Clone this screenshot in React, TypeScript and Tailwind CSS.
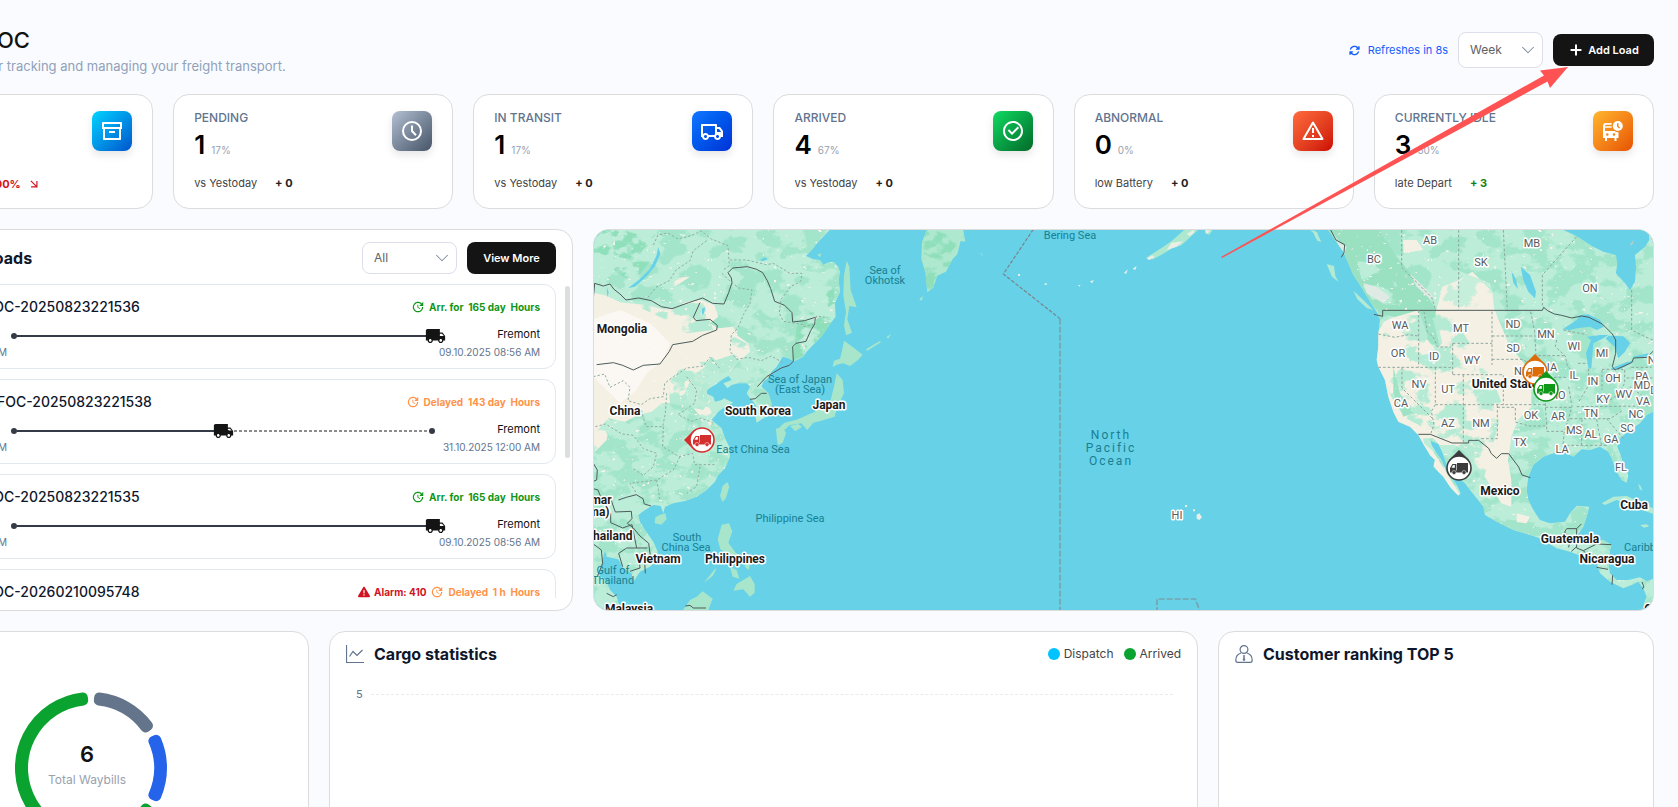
import type { ReactNode } from 'react';
import { ChevronDown, Plus } from 'lucide-react';
import { FaArrowsRotate, FaTriangleExclamation } from 'react-icons/fa6';
import { MdLocalShipping, MdUpdate } from 'react-icons/md';
import {
  RiAlertLine,
  RiArchiveLine,
  RiArrowRightDownLine,
  RiCheckboxCircleLine,
  RiTruckLine,
} from 'react-icons/ri';

const CARD = 'rounded-2xl border border-[#dcdcdc] bg-white';

function ClockIcon() {
  return (
    <svg viewBox="0 0 24 24" className="size-6" fill="none" stroke="currentColor" strokeWidth="2">
      <circle cx="12" cy="12" r="9" />
      <path d="M12 6.5v5.5l4 4.2" />
    </svg>
  );
}

function BusClockIcon() {
  return (
    <svg viewBox="0 0 20 20" className="size-5" fill="currentColor" fillRule="evenodd">
      <path d="M0 5Q0 2 3 2H8.500V3.800H3.200Q2 3.800 2 5.200H8.700V6.800H2V10H11.500Q13 11.300 15.500 11.200V17H13.500V20H11.500V17H4V20H2V17H0ZM4.300 12.200a1.300 1.300 0 1 0 0 2.600 1.300 1.300 0 0 0 0-2.600ZM11 12.200a1.300 1.300 0 1 0 0 2.600 1.300 1.300 0 0 0 0-2.600Z" />
      <path d="M14.800 0a5 5 0 1 1 0 10 5 5 0 0 1 0-10ZM14 2.200v3.300l2 2 1-1-1.500-1.500V2.200Z" />
    </svg>
  );
}

type Stat = {
  label: string;
  value: string;
  percent: string;
  note: string;
  delta: string;
  deltaColor: string;
  tile: string;
  icon: ReactNode;
};

const stats: Stat[] = [
  {
    label: 'PENDING',
    value: '1',
    percent: '17%',
    note: 'vs Yestoday',
    delta: '+ 0',
    deltaColor: 'text-[#222]',
    tile: 'from-[#b4c0d3] to-[#475569]',
    icon: <ClockIcon />,
  },
  {
    label: 'IN TRANSIT',
    value: '1',
    percent: '17%',
    note: 'vs Yestoday',
    delta: '+ 0',
    deltaColor: 'text-[#222]',
    tile: 'from-[#1677ff] to-[#002fd6]',
    icon: <RiTruckLine className="size-6" />,
  },
  {
    label: 'ARRIVED',
    value: '4',
    percent: '67%',
    note: 'vs Yestoday',
    delta: '+ 0',
    deltaColor: 'text-[#222]',
    tile: 'from-[#0fdc62] to-[#046a2a]',
    icon: <RiCheckboxCircleLine className="size-6" />,
  },
  {
    label: 'ABNORMAL',
    value: '0',
    percent: '0%',
    note: 'low Battery',
    delta: '+ 0',
    deltaColor: 'text-[#222]',
    tile: 'from-[#ff6a3d] to-[#cc0000]',
    icon: <RiAlertLine className="size-6" />,
  },
  {
    label: 'CURRENTLY IDLE',
    value: '3',
    percent: '50%',
    note: 'late Depart',
    delta: '+ 3',
    deltaColor: 'text-[#16800a]',
    tile: 'from-[#ffb52e] to-[#e65100]',
    icon: <BusClockIcon />,
  },
];

function IconTile({ tile, children }: { tile: string; children: ReactNode }) {
  return (
    <div
      className={`flex size-10 shrink-0 items-center justify-center rounded-lg bg-linear-to-br text-white shadow-[0_4px_8px_rgba(0,0,0,0.1)] ${tile}`}
    >
      {children}
    </div>
  );
}

function StatCard({ stat }: { stat: Stat }) {
  return (
    <div className={`${CARD} flex h-[115px] justify-between px-5 py-4`}>
      <div className="flex flex-col">
        <h3 className="text-xs leading-[14px] font-medium text-slate-500">{stat.label}</h3>
        <p className="mt-1 flex items-baseline gap-1.5">
          <span className="text-[26px] leading-8 font-semibold text-black">{stat.value}</span>
          <span className="text-[10px] text-gray-400">{stat.percent}</span>
        </p>
        <p className="mt-3.5 flex gap-[18px] text-[11px] leading-4 text-[#444]">
          {stat.note}
          <span className={`font-bold ${stat.deltaColor}`}>{stat.delta}</span>
        </p>
      </div>
      <IconTile tile={stat.tile}>{stat.icon}</IconTile>
    </div>
  );
}

function Select({ label, options, className }: { label: string; options: string[]; className: string }) {
  return (
    <div className={`relative ${className}`}>
      <select
        aria-label={label}
        className="size-full appearance-none rounded-lg border border-[#dcdfe9] bg-white pr-7 pl-[11px] text-xs text-[#606266]"
      >
        {options.map((option) => (
          <option key={option}>{option}</option>
        ))}
      </select>
      <ChevronDown
        className="pointer-events-none absolute top-1/2 right-1 size-[22px] -translate-y-1/2 text-[#7f8aa0]"
        strokeWidth={1.1}
      />
    </div>
  );
}

type Load = {
  id: string;
  indent: string;
  alarm?: number;
  status: string;
  duration: string;
  color: string;
  progress: number;
  place: string;
  date: string;
};

const loads: Load[] = [
  {
    id: 'FOC-20250823221536',
    indent: 'pl-[79px]',
    status: 'Arr. for',
    duration: '165 day',
    color: 'text-[#109618]',
    progress: 100,
    place: 'Fremont',
    date: '09.10.2025 08:56 AM',
  },
  {
    id: 'FOC-20250823221538',
    indent: 'pl-[91px]',
    status: 'Delayed',
    duration: '143 day',
    color: 'text-[#ff9248]',
    progress: 50,
    place: 'Fremont',
    date: '31.10.2025 12:00 AM',
  },
  {
    id: 'FOC-20250823221535',
    indent: 'pl-[79px]',
    status: 'Arr. for',
    duration: '165 day',
    color: 'text-[#109618]',
    progress: 100,
    place: 'Fremont',
    date: '09.10.2025 08:56 AM',
  },
  {
    id: 'FOC-20260210095748',
    indent: 'pl-[79px]',
    alarm: 410,
    status: 'Delayed',
    duration: '1 h',
    color: 'text-[#ff9248]',
    progress: 20,
    place: 'Fremont',
    date: '31.10.2025 12:00 AM',
  },
];

function LoadItem({ load }: { load: Load }) {
  return (
    <li className="h-[85px] shrink-0 rounded-xl border border-slate-200 px-[15px] pt-3">
      <div className="flex items-center justify-between">
        <h3 className={`text-[14px] leading-5 font-medium text-slate-900 ${load.indent}`}>{load.id}</h3>
        <div className="flex items-center gap-1 text-[10px] leading-5 font-bold">
          {load.alarm && (
            <span className="flex items-center gap-1 text-[#cf1322]">
              <FaTriangleExclamation className="size-3" />
              Alarm: {load.alarm}
            </span>
          )}
          <span className={`flex items-center gap-1 ${load.color}`}>
            <MdUpdate className="size-[14px]" />
            <span className="whitespace-pre">{`${load.status}  ${load.duration}  Hours`}</span>
          </span>
        </div>
      </div>
      <div className="mt-[7px] flex justify-between">
        <p className="w-[101px] pt-5 text-right text-[10px] leading-4 whitespace-nowrap text-slate-500">
          {load.date}
        </p>
        <div className="relative mx-1 flex h-6 flex-1 items-center">
          <span className="size-1.5 rounded-full bg-[#343a46]" />
          <span className="h-0.5 bg-[#343a46]" style={{ width: `${load.progress}%` }} />
          {load.progress < 100 && (
            <>
              <span className="h-0.5 flex-1 bg-[repeating-linear-gradient(90deg,#8c8c8c_0_3px,transparent_3px_5px)]" />
              <span className="size-1.5 rounded-full bg-[#343a46]" />
            </>
          )}
          <MdLocalShipping
            className="absolute top-1/2 -ml-2.5 size-[21px] -translate-y-1/2 text-[#141414]"
            style={{ left: `${load.progress}%` }}
          />
        </div>
        <div className="w-[101px] text-right whitespace-nowrap">
          <p className="text-[11px] leading-5 text-[#111]">{load.place}</p>
          <p className="text-[10px] leading-4 text-slate-500">{load.date}</p>
        </div>
      </div>
    </li>
  );
}

function LoadsPanel() {
  return (
    <section className={`${CARD} relative flex h-[382px] flex-col px-4 pt-3 pb-3`}>
      <div className="flex items-center justify-between">
        <h2 className="pl-[41px] text-base font-bold text-slate-900">Active Loads</h2>
        <div className="flex gap-2.5">
          <Select label="Load status" options={['All', 'In transit', 'Arrived']} className="h-8 w-[95px]" />
          <button className="h-8 w-[89px] rounded-lg bg-[#141414] text-[11px] font-semibold text-white">
            View More
          </button>
        </div>
      </div>
      <ul className="mt-2.5 flex flex-1 flex-col gap-2.5 overflow-hidden">
        {loads.map((load) => (
          <LoadItem key={load.id} load={load} />
        ))}
      </ul>
      <div className="absolute top-14 right-0.5 h-[172px] w-[5px] rounded-full bg-[#dddee0]" />
    </section>
  );
}

const MAP_LABEL = 'stroke-white [paint-order:stroke] [stroke-linejoin:round] [stroke-width:3px]';

const countries: [string, number, number][] = [
  ['Mongolia', 622, 333],
  ['China', 625, 415],
  ['South Korea', 758, 415],
  ['Japan', 829, 409],
  ['mar', 601, 504],
  ['ma)', 599, 516],
  ['Thailand', 609, 540],
  ['Vietnam', 658, 563],
  ['Philippines', 735, 563],
  ['Malaysia', 629, 613],
  ['United States', 1508, 388],
  ['Mexico', 1500, 495],
  ['Cuba', 1634, 509],
  ['Guatemala', 1570, 543],
  ['Nicaragua', 1607, 563],
  ['Colombia', 1670, 613],
];

const seas: [string, number, number][] = [
  ['Sea of', 885, 274],
  ['Okhotsk', 885, 284],
  ['Sea of Japan', 800, 383],
  ['(East Sea)', 800, 393],
  ['East China Sea', 753, 453],
  ['Philippine Sea', 790, 522],
  ['South', 687, 541],
  ['China Sea', 686, 551],
  ['Gulf of', 613, 574],
  ['Thailand', 613, 584],
  ['Bering Sea', 1070, 239],
  ['Caribbean', 1649, 551],
];

const states: [string, number, number][] = [
  ['AB', 1430, 244],
  ['MB', 1532, 247],
  ['BC', 1374, 263],
  ['SK', 1481, 266],
  ['ON', 1590, 292],
  ['WA', 1400, 329],
  ['MT', 1461, 332],
  ['ND', 1513, 328],
  ['MN', 1546, 338],
  ['OR', 1398, 357],
  ['ID', 1434, 360],
  ['WY', 1472, 364],
  ['SD', 1513, 352],
  ['WI', 1574, 350],
  ['MI', 1602, 357],
  ['NE', 1521, 375],
  ['IA', 1552, 371],
  ['NY', 1655, 364],
  ['NV', 1419, 388],
  ['UT', 1448, 393],
  ['IL', 1574, 379],
  ['IN', 1593, 385],
  ['OH', 1613, 382],
  ['PA', 1642, 380],
  ['MD', 1642, 389],
  ['DE', 1657, 394],
  ['WV', 1624, 398],
  ['VA', 1643, 405],
  ['MO', 1557, 399],
  ['KY', 1603, 403],
  ['CA', 1401, 407],
  ['OK', 1531, 419],
  ['AR', 1558, 420],
  ['TN', 1591, 417],
  ['NC', 1636, 418],
  ['AZ', 1448, 427],
  ['NM', 1481, 427],
  ['MS', 1574, 434],
  ['AL', 1591, 438],
  ['SC', 1627, 432],
  ['GA', 1611, 443],
  ['TX', 1520, 446],
  ['LA', 1562, 453],
  ['FL', 1621, 471],
  ['HI', 1177, 519],
];

const ASIA =
  'M0 20H728L705 45 685 65 665 90 648 108 670 118 690 120 700 135 712 128 730 125 745 140 750 155 746 180 750 215 735 250 737 290 725 305 705 335 690 355 672 372 650 395 640 410 612 424 595 415 578 410 560 440 545 455 540 470 520 485 515 500 535 520 545 550 540 585 520 595 500 608 497 595 500 560 490 545 480 535 470 520 480 500 470 490 445 490 425 495 412 505 400 490 425 480 415 468 395 480 375 495 350 510 350 522 370 530 375 545 395 540 402 535 430 548 405 560 385 575 365 600 395 625 405 655 418 680 420 710 405 745 385 765 375 785 350 810 320 830 285 843 250 850 225 860 220 880 212 858 190 855 165 870 145 885 150 905 165 930 190 965 203 995 200 1020 180 1040 150 1055 130 1085 125 1060 100 1045 85 1018 50 1010 45 990 35 1030 28 1065 50 1085 60 1110 80 1130 95 1180H0Z';

const ASIA_ISLANDS =
  'M770 122l8 18 4 70 18 52-22-4-6 40 14 40-18 8-6-30 6-40-8-50 2-60ZM762 362l30 22 26 20-14 16-24 18-20-8-20 4-12 8 4-20 18-6 6-24ZM740 460l18 20 4 40-20 40-8 30-40 12-24 6-18 22-18-20-36 6-12 12-18-6 16-14 40-10 30-14 20-8 18-24 30-12 10-40ZM558 626l22-6 8 20-10 28-14 8-4-24ZM600 618l24-6 12 8-20 14ZM412 786l6 14-10 34-10 12-8-18 8-30ZM226 880l4 18-16 16-20-4 2-18 14-8ZM395 914l22-4 10 24-12 34 22 30 20 14-10 12-34-22-22-14-8-30ZM440 1092l40-24 14 24 0 26-14 12-20-22-30 4ZM372 1050l8-6-12 24-26 20ZM420 1040l20 10 8 26-20-6ZM462 1014l20 10-6 26-10-8ZM300 1140l20-10 18-16 30 22-14 36h-76ZM828 388l40-24 6 2-42 26ZM890 350l14-8-10 14ZM682 104l12-4-4 12Z';

const AMERICA =
  'M48 20L75 60 100 95 115 130 130 165 150 195 165 220 190 260 200 275 210 300 205 340 205 380 200 420 205 440 225 480 235 530 250 575 265 605 300 620 325 645 345 680 360 705 375 720 370 740 400 770 420 800 445 828 452 820 440 795 420 765 405 745 395 720 380 700 365 675 362 662 385 672 398 700 410 735 440 770 465 790 480 810 500 835 520 860 525 885 560 905 610 930 660 945 690 955 740 985 780 995 830 1015 860 1030 870 1060 900 1085 940 1105 965 1095 985 1085 1000 1105 1010 1130 1002 1150 1010 1180H1030V1076L1012 1084 990 1072 955 1080 920 1080 900 1060 895 1030 900 990 905 975 880 960 850 960 810 960 800 950 820 920 830 890 838 860 800 857 780 880 765 905 720 910 690 900 670 870 655 840 650 810 655 770 670 735 700 710 730 700 760 695 790 710 815 688 840 690 870 680 895 695 905 715 920 755 935 780 950 788 955 765 940 730 930 700 922 680 930 655 960 630 990 610 1010 585 1040 570V20Z';

const AMERICA_ISLANDS =
  'M875 850l35-20 40-2 50 22 40 20v15l-60-20-60-25-35 15ZM990 915l20-2 8 6-16 4ZM985 790l8 10 4 12-8-4ZM50 132l22 6 4 30 10 18-20-16ZM130 212l26 24 34 34-20-6-28-26ZM0 30l20 6 14 30-12-4-12-24Z';

const AMERICA_LAKES =
  'M738 20H1014l4 40-13 20-30 25 3 35-3 45-15 25-15-20-27-30 4-30-4-25-38-10-30-15-50-32ZM758 328l42-28 10-15 25-2 35 17 12 20-22 10-20-10-40 5-20 5ZM836 446l-8-46 15-40-12-10 39-5 25 0-15 10-30 15-6 75ZM895 347l45 2 20 20-15 26-20 20-10-35-28-24ZM902 446l48-20 25-4-50 28ZM968 410l47-10v8l-40 7ZM632 140l28 25 18 50-3 20-20-20-15-35ZM604 152l14 26 6 30-14-20Z';

function MapPin({ x, y, color, rotate = 0 }: { x: number; y: number; color: string; rotate?: number }) {
  return (
    <g transform={`translate(${x} ${y})`}>
      <path d="M-10-8 0-18 10-8Z" fill={color} transform={`rotate(${rotate})`} />
      <circle r="12" fill="#fff" stroke={color} strokeWidth="1.600" />
      <path d="M-2-5H9V4.500H-9V0L-6.500-4H-2.600V2.500H-2Z" fill={color} />
      <path d="M-7.500-.3-5.900-2.900H-4.200V-.3Z" fill="#fff" />
      <circle cx="-5" cy="4.500" r="2" fill={color} stroke="#fff" strokeWidth=".5" />
      <circle cx="5" cy="4.500" r="2" fill={color} stroke="#fff" strokeWidth=".5" />
    </g>
  );
}

function FleetMap() {
  return (
    <section className="h-[382px] overflow-hidden rounded-2xl border border-[#dcdcdc] bg-[#66d1e7]">
      <svg
        role="img"
        aria-label="Fleet map"
        viewBox="594 230 1059 380"
        preserveAspectRatio="xMidYMid slice"
        className="size-full font-[Roboto,sans-serif]"
      >
        <defs>
          <filter id="patches" x="0" y="0" width="1" height="1" colorInterpolationFilters="sRGB">
            <feTurbulence type="fractalNoise" baseFrequency="0.014 0.02" numOctaves="5" seed="4" />
            <feColorMatrix values="0 0 0 0 0  0 0 0 0 0  0 0 0 0 0  12 0 0 0 -5.800" result="mask" />
            <feComposite in="SourceGraphic" in2="mask" operator="in" />
          </filter>
          <filter id="specks" x="0" y="0" width="1" height="1" colorInterpolationFilters="sRGB">
            <feTurbulence type="fractalNoise" baseFrequency="0.06 0.08" numOctaves="3" seed="9" />
            <feColorMatrix values="0 0 0 0 0  0 0 0 0 0  0 0 0 0 0  0 14 0 0 -10.200" result="mask" />
            <feComposite in="SourceGraphic" in2="mask" operator="in" />
          </filter>
          <clipPath id="asia">
            <path d={ASIA} />
          </clipPath>
          <clipPath id="america">
            <path d={AMERICA} />
          </clipPath>
        </defs>

        {/* East Asia */}
        <g transform="translate(590 220) scale(.33333)" strokeLinejoin="round">
          <path d={ASIA} fill="#bbedd9" />
          <path d={ASIA_ISLANDS} fill="#a8e6cc" />
          <g clipPath="url(#asia)">
            <path d={ASIA} fill="#a3e5cb" filter="url(#patches)" />
            <path
              d="M0 20h200l-10 90-60 80-60-40-70-10ZM620 320l110-120 10 100-80 100-50 20Z"
              fill="#8fdfbb"
              filter="url(#patches)"
            />
            <path
              d="M0 215l50 12 40 20 80 8 60 16 60-26 45-4 38 14 12 35-25 20 24 15 46-5 10 25 35 25 5 25-40 35-20 25-20-10-35-35-20 30-40 30-20 50-40 30-30 0-30 25-40 10-40 20-50-10-55 60Z"
              fill="#f5f0e4"
            />
            <path d="M0 300l90-30 90 40 60 60-20 50-50 40-30 50-50 40-40-40-50-50Z" fill="#fbf8f3" />
            <path
              d="M290 450l60 20 30 80-40 50-50-60ZM180 180l120-10-60 40ZM0 570l60 30-10 60-50 50ZM395 520l40 20-50 30-30 60-30-40Z"
              fill="#f5f0e4"
              filter="url(#patches)"
            />
            <path
              d="M100 240l240 10 30 80-80 10-60-40ZM230 440l150-20 60-20-30-60 80 40-90 90-60 100-100-20Z"
              fill="#b5ebd4"
              filter="url(#patches)"
            />
            <path d={ASIA} fill="#f6f4ea" filter="url(#specks)" />
          </g>
          <path
            d="M205 82l6 20-16 36-24 30-36 32-20 4 34-26 30-30 20-40ZM50 200l6 18-4 14ZM336 266l10-4-4 18-6 4ZM510 120l14-8 10 6-16 6Z"
            fill="#66d1e7"
          />
          <g fill="none" stroke="#4d5b5a" strokeWidth="3">
            <path d="M10 235l4-45 26 8 20-6 12 16 18 14 18 18 38-6 38 8 30 18 32 6 50-18 42-14 30 16 34 2 14-34 10-30-2-14-10-16 14-14 44-4 28 8 18 10 14 24 10 24 12 38 30 12 22 22 2 28 36-4 32-10-2 20-12 20-14 32-30 6-10 10 2 44-12 12-24 8-24 14-20 12-28 30" />
            <path d="M330 248l-20 44 8 10 42-4 22 18-2 14-42 16-30 18-60 10-10 20-28 38-50 4-30 14-32-14-28-8-50 6M480 538l16-2 18-16 16 0" />
            <path d="M85 840l24-8 30-8 20 12 4 16 20 6M10 730l12 20-2 30-10 4M10 806l14 4 10 26 30 6 12 34 48-2 2 22-14 14 18 14 20 24 26 22 6 44-18 12 2 34M62 880l0 28 36 16 28-10 14 70M10 972l24 18 4 40-16 40M172 984h-62l-24 16 12 40M120 1054l30-10-2-24M50 1120l20 10 10-6M286 1158l14-2 10 8h38" />
          </g>
          <g fill="none" stroke="#8fada3" strokeWidth="3" strokeDasharray="7 6">
            <path d="M190 75l14-30 30-6 30 18 40-10 30-14 30 24 50 20 4 60-20 14M350 62l-40 30-10 30-42 28-20 32-40 20-24 30M420 120l50 0 60 14 20-4 50 30 36 0-4 24-30 16-30 40-4 40 12 24 60 10M396 160l20 20 30 24 40 6-6 40-20 34-16 40-20 20-4 50 20 24 34-6 40 10 30-14 34 20M640 320l30-6 10-26 24 4M10 470l34-8 16 40 40-20 20 20-6 40 40 12 26-18 40-6 4-40 26-20 40-26 50-6 20-26 30 34M290 470l30 40-6 40-50 34 40 20 30-10 34 14M230 520l-4 60-8 40-50 0-14-50M16 620l30-8 50 30 34 4 30 40 40 14-10 40-30 26-30-20M220 620l-2 60 50 30 40-10 6 34 60 0M200 780l10 60M270 710l-20 40-50 30-80 10 20 30M330 740l-10 60-30 20" />
          </g>
        </g>

        {/* Kamchatka, the Aleutians, Hawaii and the date line */}
        <g transform="translate(900 220) scale(.33333)">
          <path
            d="M84 20h104l8 45-14-2-10 40-14 14-20 38-26 12-12 36-18 14-6-60-12-40 2-50ZM58 238l12-10-6 14ZM240 96l10 12-6-4ZM738 114l24-16 26-16 26-18 50-44h40l-40 38-20 18-26 8-36 22-24 12ZM914 20h30l-16 24-12-4ZM1238 30l14 8 4 24-10-10Z"
            fill="#aee8cf"
          />
          <path
            d="M84 20h104l8 45-14-2-10 40-14 14-20 38-26 12-12 36-18 14-6-60-12-40 2-50Z"
            fill="#8fdfbb"
            filter="url(#patches)"
          />
          <path
            d="M740 116l16-10 8 6-16 8ZM800 90l14-22 36-4-20 16ZM860 42l20-12 4 6-14 12ZM916 30l14 2-10 10ZM698 146l12-8-4 12ZM672 158l12-10-6 14ZM570 184l12-4-6 10ZM534 196l8-2-4 6ZM354 162h6v6h-6ZM434 190h6v5h-6ZM855 855h6v6h-6ZM879 868h6v6h-6ZM890 884l8-4 8 12-8 8-8-4Z"
            fill="#e9efe6"
          />
          <g fill="none" stroke="#77a3af" strokeWidth="5">
            <path d="M400 28L310 162 480 296" stroke="#7c8288" strokeWidth="3.500" strokeDasharray="11 5" />
            <path d="M480 296V1180" strokeDasharray="18 6" />
            <path d="M771 1180V1137H886L902 1180" strokeDasharray="18 6" />
          </g>
        </g>

        {/* North America */}
        <g transform="translate(1310 220) scale(.33333)" strokeLinejoin="round">
          <path d={AMERICA} fill="#bbedd9" />
          <path d={AMERICA_ISLANDS} fill="#b2ead3" />
          <g clipPath="url(#america)">
            <path d={AMERICA} fill="#a3e5cb" filter="url(#patches)" />
            <path d="M40 20h160l60 90 60 70 60 90-10 80-30 40-50-90-80-20-60-60Z" fill="#9ae1c2" />
            <path d="M140 120l90 20 60 110-90 10-40-60Z" fill="#bbedd9" filter="url(#patches)" />
            <path
              d="M222 305l20-10 85-25 10 70 40 50 20-20-20-90 20-80 50-20 40-25 60 60 5 50 45 110 45 55 22 50v80l-40 40-20 50-10 70 10 60v80l-30-10-30-50-40-60-30-40-40-25-45 0-20-20-30 0 10 50-40 0-45-60-50-30-30-40 10-110-12-90Z"
              fill="#f5f0e4"
            />
            <path
              d="M325 655l45 40 50 80 30 50-30-10-50-80ZM280 60l40 0 20 30-60 10ZM620 880l40 10-10 20-30-4Z"
              fill="#f5f0e4"
            />
            <path
              d="M160 190l40 10 40 30-20 20-50-30ZM300 160l30 30 40 40-10 6-40-36ZM70 40l20 30 20 10-10 30Z"
              fill="#dfeae4"
            />
            <path
              d="M220 290l200-10 120 180 40 100-60 220-60-90-180-100-60-100Z"
              fill="#b5ebd4"
              filter="url(#patches)"
            />
            <path d="M330 280l40 20 20 80-30-10ZM250 440l20 80 40 60-30 10-30-70Z" fill="#9fe3c6" />
            <path d="M440 150l100 40 20 70-180 0Z" fill="#c5eedb" filter="url(#patches)" />
            <path d={AMERICA} fill="#f6f4ea" filter="url(#specks)" />
          </g>
          <path d={AMERICA_LAKES} fill="#66d1e7" />
          <path d="M960 74l12-16-4 14-10 6Z" fill="#c3cdca" />
          <g fill="none" stroke="#4d5b5a" strokeWidth="3">
            <path d="M192 283l26 6V271H697l4-9 12 10 20 10 22 4 30 8 30-6 22 4 40 20 30 30 10 18v40l-10 40 8 10 50-22 6-14 40-2 22-22" />
            <path d="M325 643l36 0 65 26h50v-8h30l30 24 8 16 16 14 14-14h22l30 40 10 24 25 8" />
            <path d="M62 30l16 30 26 14-2 24-8 14M764 936l6-10h30l14-14M764 936l16 26-4 20M800 926v58l20 8 40-20 44 2M784 994l16-14M820 992l10 10M860 1042l34 6M908 1066l-2 28M996 1086l6 16-6 4" />
          </g>
          <g fill="none" stroke="#8fa79f" strokeWidth="3" strokeDasharray="8 6">
            <path d="M275 30V142l50 50 40 40 12 38M446 30V271M580 30l12 240M800 50L697 165V262M965 210V330l40 20 24 10M205 342l50 10 40-8 32 4M326 271V442M205 442H428M342 275l10 60 20 20 10 26h40M428 370V464M428 370H546M546 275V435M546 348H672M662 275l12 60 4 72H764M546 418h90l30 16M428 464H580V554M460 464V668M376 442V554H706M376 554l-12 20 8 40-10 28M276 442v62l90 90M562 556V656H512M562 562h54v44l40 12h50M740 360l-4 20 30 28 6 30 20 20-10 30M676 472h92M706 480V562l4 50V634h50M706 562h80M776 500l10 60-24 80-4 50M804 430h30M760 330l70 14M836 446v50l-30 50M876 450v60M944 450v40l-30 50M876 448h68M800 560l220-2M780 596h120l40-26M816 598l-2 78M860 598l14 76M770 676h120M890 596l50 60M964 442h60M950 474h80M900 540l60-40 40 30" />
          </g>
        </g>

        <g textAnchor="middle" className="text-[11px]">
          <g className="fill-[#197f92]">
            {seas.map(([name, x, y]) => (
              <text key={name + y} x={x} y={y}>
                {name}
              </text>
            ))}
          </g>
          <g className={`fill-[#555b61] ${MAP_LABEL}`}>
            {states.map(([name, x, y]) => (
              <text key={name} x={x} y={y}>
                {name}
              </text>
            ))}
          </g>
        </g>
        <g textAnchor="middle" className="fill-[#197f92] text-xs tracking-[2px]">
          <text x="1111" y="439">North</text>
          <text x="1111" y="452">Pacific</text>
          <text x="1111" y="465">Ocean</text>
        </g>
        <g textAnchor="middle" className={`fill-[#1b1b1b] text-xs font-bold ${MAP_LABEL}`}>
          {countries.map(([name, x, y]) => (
            <text key={name} x={x} y={y}>
              {name}
            </text>
          ))}
        </g>

        <MapPin x={702} y={440} color="#d32f2f" rotate={-90} />
        <MapPin x={1535} y={372} color="#dd6b08" />
        <MapPin x={1546} y={389} color="#109618" />
        <MapPin x={1459} y={468} color="#3c3c3c" />
      </svg>
    </section>
  );
}

// Ring sector with rounded corners; angles run clockwise from 12 o'clock.
function sector(from: number, to: number) {
  const inset = 6.6;
  const point = (radius: number, degrees: number) => {
    const angle = (degrees * Math.PI) / 180;
    return `${80 + radius * Math.sin(angle)} ${80 - radius * Math.cos(angle)}`;
  };
  const start = from + inset;
  const end = to - inset;
  const large = end - start > 180 ? 1 : 0;
  return `M${point(71, start)}A71 71 0 ${large} 1 ${point(71, end)}L${point(68, end)}A68 68 0 ${large} 0 ${point(68, start)}Z`;
}

const segments = [
  { from: 0, to: 60, color: '#64748b' },
  { from: 60, to: 120, color: '#2563eb' },
  { from: 120, to: 360, color: '#0aa32f' },
];

function WaybillsCard() {
  return (
    <section className={`${CARD} pt-14 pl-[137px]`}>
      <div className="relative size-40">
        <svg viewBox="0 0 160 160" className="size-full" strokeWidth="10" strokeLinejoin="round">
          {segments.map(({ from, to, color }) => (
            <path key={color} d={sector(from, to)} fill={color} stroke={color} />
          ))}
        </svg>
        <div className="absolute inset-0 flex flex-col items-center justify-center pr-2 pb-2">
          <strong className="text-[22px] leading-8 font-semibold text-[#111]">6</strong>
          <span className="text-xs leading-5 text-gray-400">Total Waybills</span>
        </div>
      </div>
    </section>
  );
}

function CargoCard() {
  return (
    <section className={`${CARD} px-4 pt-2.5`}>
      <div className="flex items-center justify-between">
        <h2 className="flex items-center gap-2.5 text-base font-bold text-slate-900">
          <svg viewBox="0 0 18 18" className="size-[18px] text-slate-500" fill="none" stroke="currentColor">
            <path d="M.5 0V17.500H18" strokeWidth="1.200" />
            <path d="M3.500 11.500 7 6.500l4 4 5.500-5.500" strokeWidth="1.200" />
          </svg>
          Cargo statistics
        </h2>
        <ul className="flex gap-2.5 text-xs text-[#444]">
          <li className="flex items-center gap-1">
            <span className="size-3 rounded-full bg-[#00c3ff]" />
            Dispatch
          </li>
          <li className="flex items-center gap-1">
            <span className="size-3 rounded-full bg-[#0aa32f]" />
            Arrived
          </li>
        </ul>
      </div>
      <div className="mt-5 flex items-center gap-2 pr-2 pl-2.5">
        <span className="text-[11px] text-slate-500">5</span>
        <span className="flex-1 border-t border-dashed border-[#ebebeb]" />
      </div>
    </section>
  );
}

function RankingCard() {
  return (
    <section className={`${CARD} px-4 pt-2.5`}>
      <h2 className="flex items-center gap-2.5 text-base font-bold text-slate-900">
        <svg
          viewBox="0 0 18 18"
          className="size-[18px] text-slate-500"
          fill="none"
          stroke="currentColor"
          strokeWidth="1.200"
        >
          <circle cx="9" cy="4.500" r="3.900" />
          <path d="M6 8C3 9 .8 12 .8 15c0 1.500.6 2.300 1.700 2.300h13c1.100 0 1.700-.8 1.700-2.300 0-3-2.200-6-5.200-7" />
          <path d="M8.200 10.500h1.600l-.4 1.500.6 3-1 1-1-1 .6-3Z" fill="currentColor" strokeWidth=".5" />
        </svg>
        Customer ranking TOP 5
      </h2>
    </section>
  );
}

export default function App() {
  return (
    <div className="relative h-screen overflow-hidden bg-[#fafbff] font-[Inter,sans-serif]">
      <main className="-ml-[127px] flex flex-col gap-5 pr-6">
        <header className="flex h-[74px] items-end justify-between">
          <div className="whitespace-nowrap">
            <h1 className="pl-[111px] text-[22px] leading-7 font-medium text-[#111]">FOC</h1>
            <p className="pt-1 pl-[113px] text-[13px] leading-4 text-slate-400">
              for tracking and managing your freight transport.
            </p>
          </div>
          <div className="flex items-center gap-2.5 pb-1.5">
            <span className="flex items-center gap-2 text-[11px] text-blue-600">
              <FaArrowsRotate className="size-[11px]" />
              Refreshes in 8s
            </span>
            <Select label="Period" options={['Week', 'Day', 'Month']} className="h-9 w-[85px]" />
            <button className="flex h-8 w-[101px] items-center justify-center gap-1 rounded-lg bg-[#141414] text-[11px] font-semibold text-white">
              <Plus className="size-4" strokeWidth={3} />
              Add Load
            </button>
          </div>
        </header>

        <div className="grid grid-cols-6 gap-5">
          <div className={`${CARD} flex h-[115px] justify-between px-5 py-4`}>
            <p className="flex items-center gap-1.5 self-end pl-[96px] text-[11px] leading-4 font-bold text-[#cf1322]">
              100%
              <RiArrowRightDownLine className="size-[14px]" />
            </p>
            <IconTile tile="from-[#00d4ff] to-[#0052cc]">
              <RiArchiveLine className="size-6" />
            </IconTile>
          </div>
          {stats.map((stat) => (
            <StatCard key={stat.label} stat={stat} />
          ))}
        </div>

        <div className="grid grid-cols-[700px_1fr] gap-5">
          <LoadsPanel />
          <FleetMap />
        </div>

        <div className="grid h-80 grid-cols-[436px_1fr_436px] gap-5">
          <WaybillsCard />
          <CargoCard />
          <RankingCard />
        </div>
      </main>

      {/* Pointer to the Add Load button */}
      <svg
        viewBox="0 0 347 191"
        className="pointer-events-none absolute top-[67px] right-[110px] h-[191px] w-[347px]"
        fill="#ff5252"
      >
        <path d="M347 0 329 21 326.500 14.500 1 191 0 190 323 8.500 319 3.500Z" />
      </svg>
    </div>
  );
}
